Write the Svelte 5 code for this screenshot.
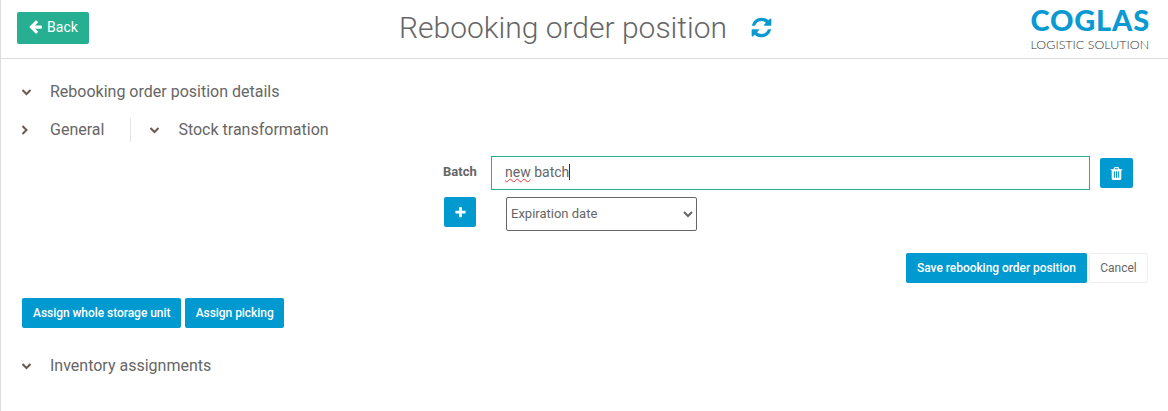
<script>
  const arrowLeft = 'M1664 896v128q0 53-32.5 90.5t-84.5 37.5h-704l293 294q38 36 38 90t-38 90l-75 76q-37 37-90 37-52 0-91-37l-651-652q-37-37-37-90 0-52 37-91l651-650q38-38 91-38 52 0 90 38l75 74q38 38 38 91t-38 91l-293 293h704q52 0 84.5 37.5t32.5 90.5z'
  const refresh = 'M1639 1056q0 5-1 7-64 268-268 434.5t-478 166.5q-146 0-282.5-55t-243.5-157l-129 129q-19 19-45 19t-45-19-19-45v-448q0-26 19-45t45-19h448q26 0 45 19t19 45-19 45l-137 137q71 66 161 102t187 36q134 0 250-65t186-179q11-17 53-117 8-23 30-23h192q13 0 22.5 9.5t9.5 22.5zm25-800v448q0 26-19 45t-45 19h-448q-26 0-45-19t-19-45 19-45l138-138q-148-137-349-137-134 0-250 65t-186 179q-11 17-53 117-8 23-30 23h-199q-13 0-22.5-9.5t-9.5-22.5v-7q65-268 270-434.5t480-166.5q146 0 284 55.5t245 156.5l130-129q19-19 45-19t45 19 19 45z'
  const trash = 'M704 1376v-704q0-14-9-23t-23-9h-64q-14 0-23 9t-9 23v704q0 14 9 23t23 9h64q14 0 23-9t9-23zm256 0v-704q0-14-9-23t-23-9h-64q-14 0-23 9t-9 23v704q0 14 9 23t23 9h64q14 0 23-9t9-23zm256 0v-704q0-14-9-23t-23-9h-64q-14 0-23 9t-9 23v704q0 14 9 23t23 9h64q14 0 23-9t9-23zm-544-992h448l-48-117q-7-9-17-11h-317q-10 2-17 11zm928 32v64q0 14-9 23t-23 9h-96v948q0 83-47 143.5t-113 60.5h-832q-66 0-113-58.5t-47-141.5v-952h-96q-14 0-23-9t-9-23v-64q0-14 9-23t23-9h309l70-167q15-37 54-63t79-26h320q40 0 79 26t54 63l70 167h309q14 0 23 9t9 23z'
  const plus = 'M1600 736v192q0 40-28 68t-68 28h-416v416q0 40-28 68t-68 28h-192q-40 0-68-28t-28-68v-416h-416q-40 0-68-28t-28-68v-192q0-40 28-68t68-28h416v-416q0-40 28-68t68-28h192q40 0 68 28t28 68v416h416q40 0 68 28t28 68z'
</script>

{#snippet chevron(open)}
  <svg class="chevron" viewBox="0 0 10 10" width="10" height="10" aria-hidden="true">
    <path d={open ? 'M0.5 3 L4.5 7 L8.5 3' : 'M0.5 1 L4.5 5 L0.5 9'} />
  </svg>
{/snippet}

<div class="page">
  <header>
    <div class="header-left">
      <button class="btn back">
        <svg viewBox="0 0 1792 1792" width="15" height="15" aria-hidden="true"><path d={arrowLeft} /></svg>
        Back
      </button>
    </div>
    <div class="title">
      <h1>Rebooking order position</h1>
      <svg class="refresh" viewBox="0 0 1792 1792" width="23" height="23" aria-hidden="true"><path d={refresh} /></svg>
    </div>
    <div class="logo">
      <span class="logo-name">COGLAS</span>
      <span class="logo-sub">LOGISTIC SOLUTION</span>
    </div>
  </header>

  <main>
    <div class="section">
      {@render chevron(true)}
      <span>Rebooking order position details</span>
    </div>

    <div class="tabs">
      <div class="tab">
        {@render chevron(false)}
        <span>General</span>
      </div>
      <div class="tab tab-second">
        {@render chevron(true)}
        <span>Stock transformation</span>
      </div>
    </div>

    <div class="form">
      <div class="batch-row">
        <span class="label">Batch</span>
        <div class="input" role="textbox" tabindex="0">
          <span class="typed"><span class="misspelled">new</span> batch</span>
        </div>
        <button class="btn icon-btn trash" aria-label="Delete">
          <svg viewBox="0 0 1792 1792" width="15" height="15" aria-hidden="true"><path d={trash} /></svg>
        </button>
      </div>
      <div class="add-row">
        <button class="btn icon-btn add" aria-label="Add">
          <svg viewBox="0 0 1792 1792" width="13" height="13" aria-hidden="true"><path d={plus} /></svg>
        </button>
        <select>
          <option>Expiration date</option>
        </select>
      </div>
    </div>

    <div class="actions">
      <button class="btn primary save">Save rebooking order position</button>
      <button class="btn cancel">Cancel</button>
    </div>

    <div class="assign">
      <button class="btn primary">Assign whole storage unit</button>
      <button class="btn primary picking">Assign picking</button>
    </div>

    <div class="section inventory">
      {@render chevron(true)}
      <span>Inventory assignments</span>
    </div>
  </main>
</div>

<style>
  :global(body) {
    background: #fff;
  }
  .page {
    height: 411px;
    box-sizing: border-box;
    border-left: 1px solid #ddd;
    font-family: Roboto, sans-serif;
    color: #666;
    overflow: hidden;
  }
  header {
    height: 59px;
    box-sizing: border-box;
    border-bottom: 1px solid #ddd;
    display: grid;
    grid-template-columns: 1fr auto 1fr;
    align-items: center;
  }
  .header-left {
    padding-left: 16px;
    margin-top: -3px;
  }
  .btn {
    font-family: Roboto, sans-serif;
    font-size: 12px;
    font-weight: 500;
    border: 0;
    border-radius: 2px;
    color: #fff;
    padding: 0;
    display: inline-flex;
    align-items: center;
    justify-content: center;
  }
  .btn svg {
    fill: currentColor;
  }
  .back {
    width: 72px;
    height: 32px;
    gap: 4px;
    padding-bottom: 2px;
    background: #26b091;
    font-size: 14px;
    font-weight: 400;
  }
  .title {
    display: flex;
    align-items: center;
    gap: 23px;
    margin: -4px 0 0 3px;
  }
  h1 {
    margin: 0;
    font-size: 30px;
    font-weight: 300;
    color: #666;
  }
  .refresh {
    fill: #0a9ad1;
  }
  .logo {
    justify-self: end;
    padding-right: 18px;
    display: flex;
    flex-direction: column;
    align-items: flex-start;
    margin-top: -2px;
  }
  .logo-name {
    font-family: Lato, sans-serif;
    font-weight: 900;
    font-size: 29px;
    line-height: 29px;
    color: #0a9ad1;
    letter-spacing: 0.8px;
  }
  .logo-sub {
    font-family: Lato, sans-serif;
    font-weight: 300;
    font-size: 12.5px;
    line-height: 14px;
    margin-top: 4px;
    color: #333;
  }
  main {
    padding: 0 20px 0 21px;
  }
  .section,
  .tab {
    display: flex;
    align-items: center;
    gap: 18px;
    font-size: 16px;
    color: #666;
    line-height: 24px;
  }
  .chevron {
    flex: none;
    fill: none;
    stroke: #6b5a50;
    stroke-width: 2;
  }
  .section {
    margin-top: 21px;
  }
  .tabs {
    display: flex;
    margin-top: 14px;
  }
  .tab-second {
    margin-left: 26px;
    padding-left: 19px;
    border-left: 1px solid #e4e4e4;
  }
  .form {
    margin: 14px 0 0 421px;
  }
  .batch-row {
    display: flex;
    align-items: center;
  }
  .label {
    width: 48px;
    font-size: 13px;
    font-weight: 700;
    margin-top: -3px;
  }
  .input {
    width: 599px;
    height: 34px;
    box-sizing: border-box;
    border: 1px solid #26b091;
    padding-left: 13px;
    font-size: 14px;
    line-height: 30px;
  }
  .typed {
    border-right: 1px solid #333;
  }
  .misspelled {
    text-decoration: underline wavy #e33;
    text-decoration-thickness: 1px;
  }
  .icon-btn {
    width: 33px;
    height: 30px;
    background: #0099d0;
  }
  .trash {
    margin: 0 0 0 10px;
  }
  .add-row {
    display: flex;
    align-items: flex-start;
    margin: 7px 0 0 1px;
  }
  .add {
    width: 32px;
  }
  select {
    margin-left: 30px;
    width: 191px;
    height: 34px;
    padding-bottom: 2px;
    font-family: Roboto, sans-serif;
    font-size: 13px;
    color: #666;
    background: #fff;
    border: 1px solid #666;
    border-radius: 2px;
  }
  .actions {
    display: flex;
    justify-content: flex-end;
    gap: 2px;
    margin-top: 22px;
  }
  .primary {
    height: 30px;
    padding: 0 11px;
    background: #0099d0;
    letter-spacing: -0.05px;
  }
  .save {
    width: 181px;
  }
  .picking {
    width: 99.5px;
    padding: 0;
  }
  .cancel {
    height: 30px;
    width: 59px;
    background: #fff;
    color: #666;
    font-weight: 400;
    border: 1px solid #eee;
    box-sizing: border-box;
  }
  .assign {
    display: flex;
    gap: 3.5px;
    margin-top: 15px;
  }
  .inventory {
    margin-top: 26px;
  }
</style>
